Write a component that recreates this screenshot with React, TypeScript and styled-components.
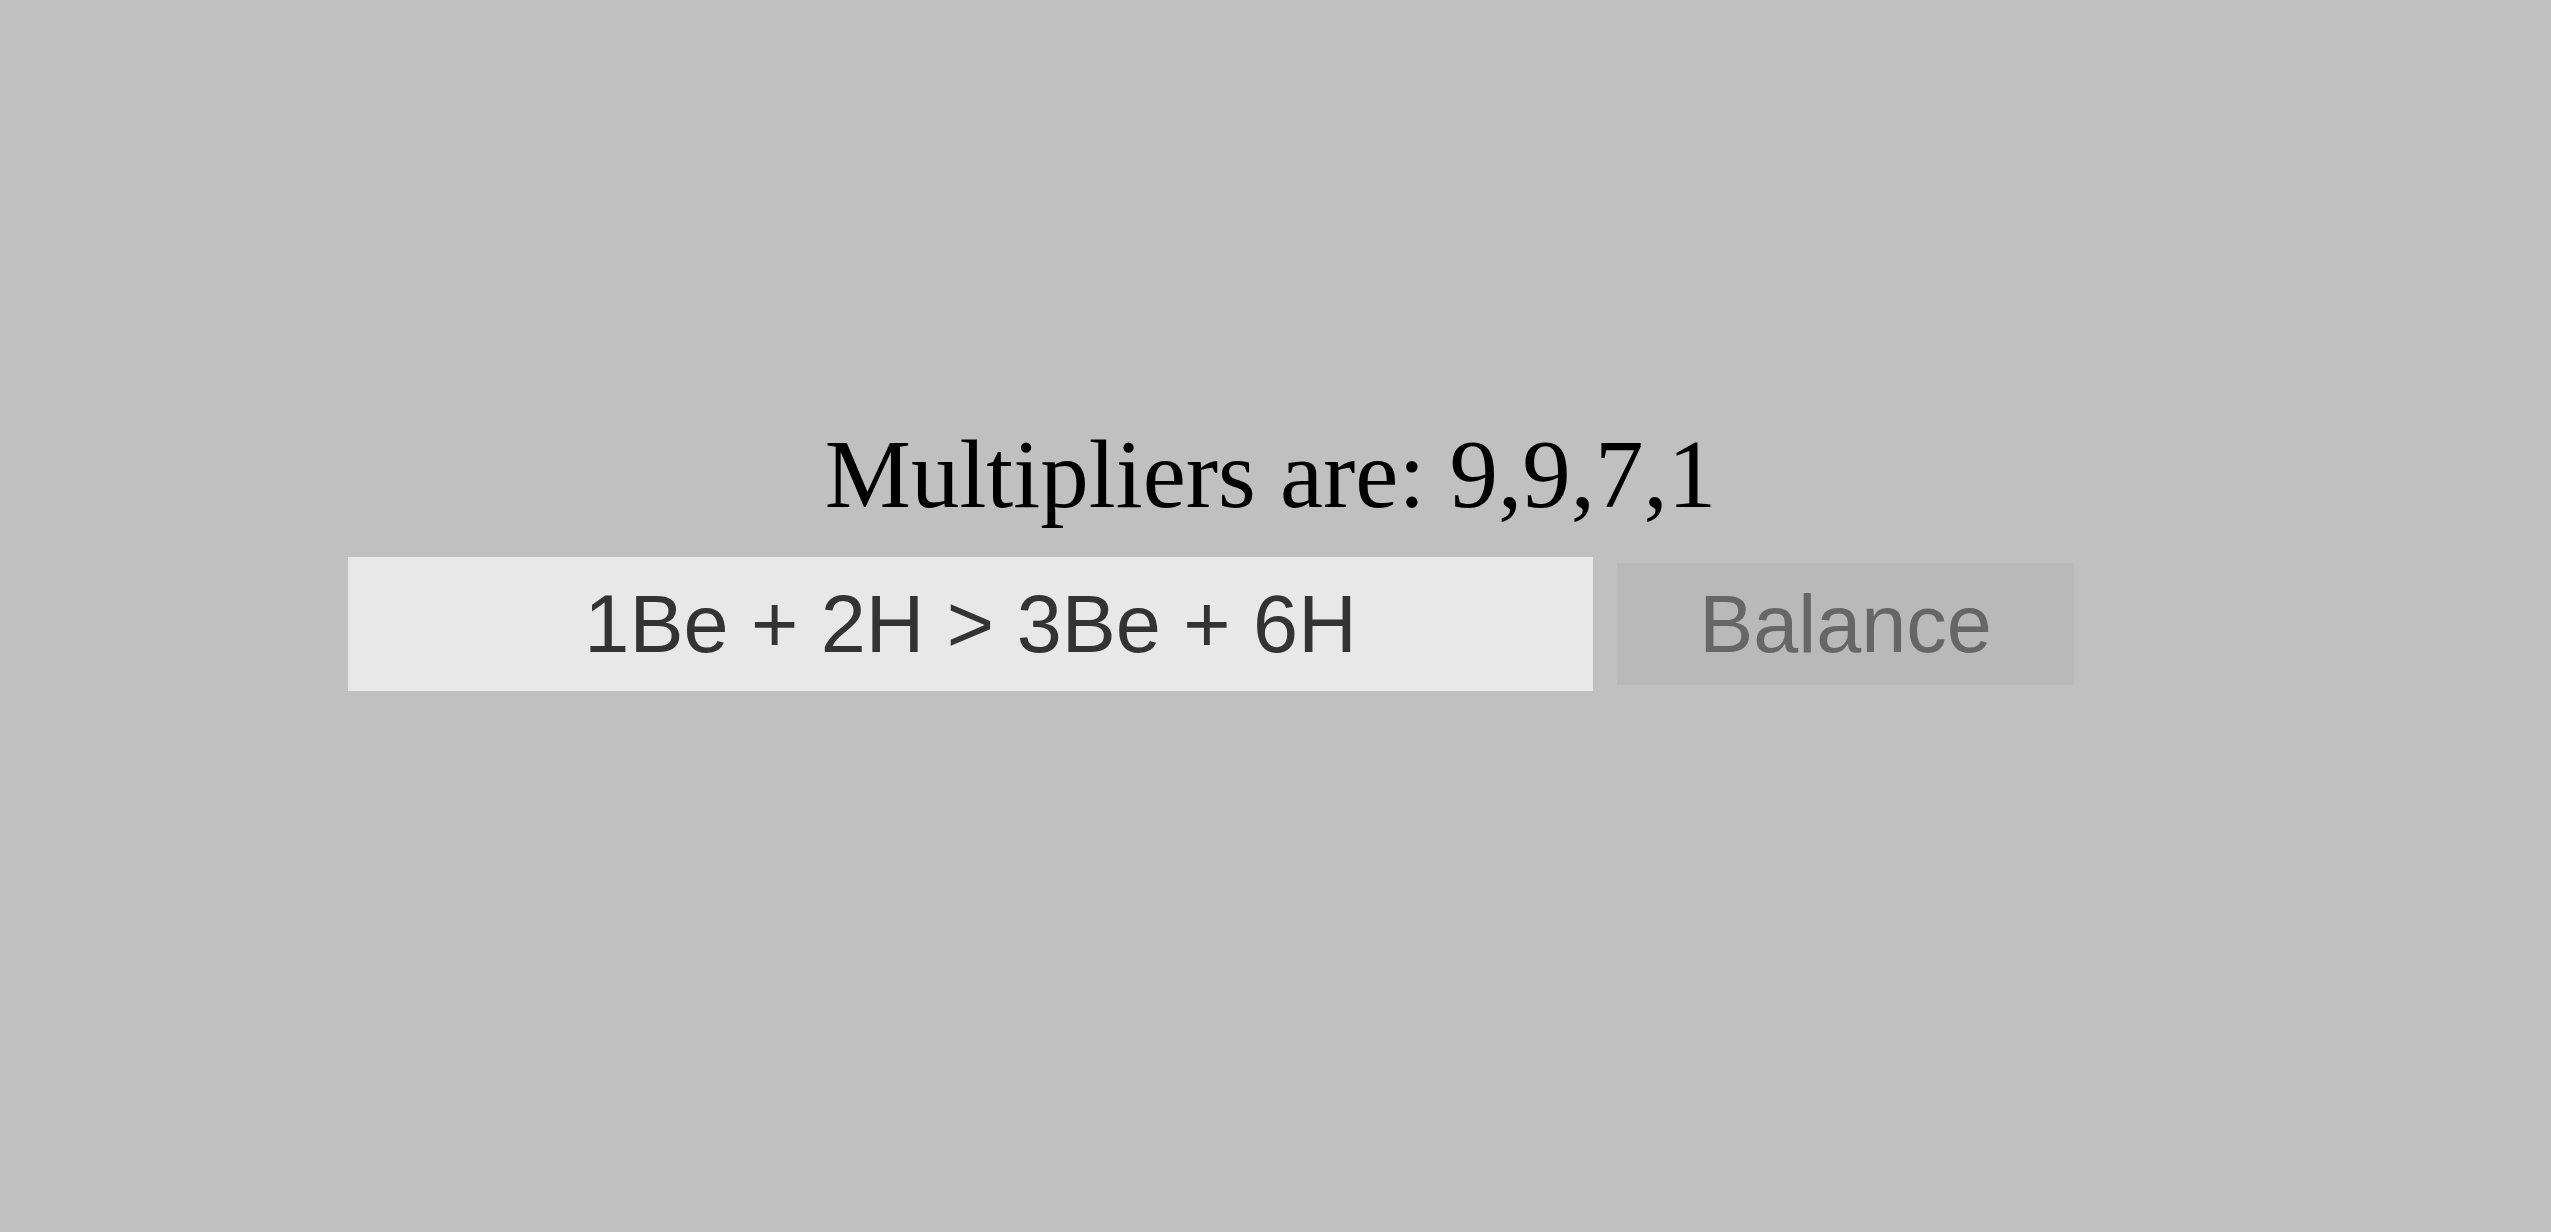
import styled, { createGlobalStyle } from "styled-components";

const Global = createGlobalStyle`
  html, body {
    margin: 0;
    padding: 0;
    background: #c0c0c0;
  }
`;

export default function App() {
    return (
        <>
            <Global />
            <Page>
                <Result>Multipliers are: 9,9,7,1</Result>
                <Row>
                    <EquationInput defaultValue="1Be + 2H > 3Be + 6H" />
                    <BalanceButton type="button">Balance</BalanceButton>
                </Row>
            </Page>
        </>
    );
}

const Page = styled.div`
  width: 2551px;
  height: 1232px;
  padding-top: 422px;
  box-sizing: border-box;
  background: #c0c0c0;
`;

const Result = styled.h1`
  margin: 0 0 29px;
  padding-right: 10px;
  font-family: "Liberation Serif", "Times New Roman", serif;
  font-weight: normal;
  font-size: 97px;
  line-height: 106px;
  color: #000;
  text-align: center;
`;

const Row = styled.div`
  display: flex;
  align-items: center;
  gap: 24px;
  padding-left: 348px;
`;

const EquationInput = styled.input`
  width: 1245px;
  height: 134px;
  box-sizing: border-box;
  border: none;
  outline: none;
  padding: 0;
  background: #e8e8e8;
  color: #333;
  font-family: "Liberation Sans", Arial, sans-serif;
  font-size: 81px;
  text-align: center;
`;

const BalanceButton = styled.button`
  width: 457px;
  height: 122px;
  box-sizing: border-box;
  border: none;
  padding: 0;
  background: #b9b9b9;
  color: #666;
  font-family: "Liberation Sans", Arial, sans-serif;
  font-size: 81px;
  cursor: pointer;
`;
